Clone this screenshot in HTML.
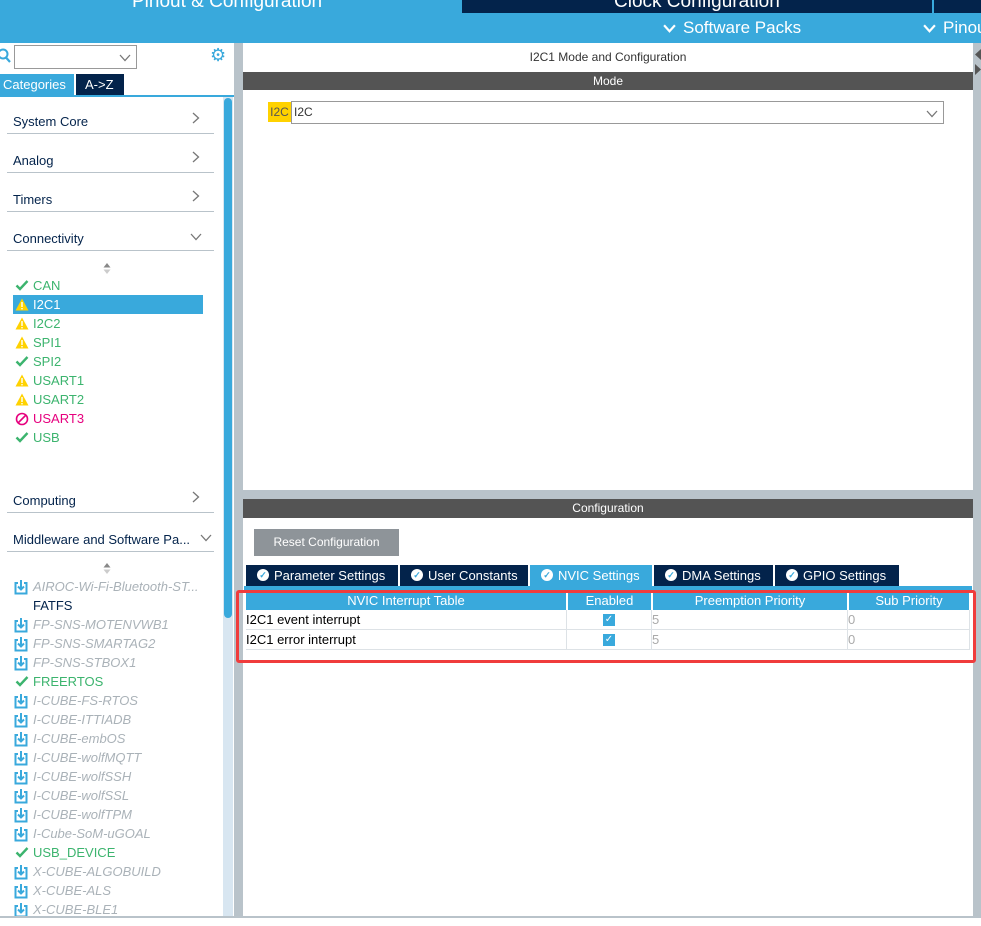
<!DOCTYPE html>
<html><head><style>
*{margin:0;padding:0;box-sizing:border-box}
body{width:981px;height:926px;overflow:hidden;background:#fff;font-family:"Liberation Sans",Arial,sans-serif;position:relative;font-size:13px}
.a{position:absolute;white-space:nowrap}
.blue{background:#39a9dc}
.navy{background:#03234b}
.cat{position:absolute;left:7px;width:207px;border-bottom:1px solid #b9c3ca;height:39px;color:#03234b;font-size:13px;padding:19px 0 0 6px}
.cat svg{position:absolute;right:14px;top:17px}
.it{position:absolute;left:13px;height:19px;font-size:13px;line-height:19px;padding-left:20px;white-space:nowrap}
.ic{position:absolute;left:2px;top:3px}
.g{color:#3cb46e}
.mw{position:absolute;left:13px;font-size:13px;line-height:19px;padding-left:20px;color:#aab2b8;font-style:italic;white-space:nowrap}
.mw .d{position:absolute;left:1px;top:3px}
.tab{position:absolute;top:565px;height:21px;background:#03234b;color:#fff;font-size:13px;line-height:21px;padding-left:28px}
.tab:before{content:"✓";position:absolute;left:11px;top:4px;width:12px;height:12px;border-radius:50%;background:#fff;color:#39a9dc;font-size:9px;line-height:12px;text-align:center;font-weight:bold}
.th{position:absolute;top:592px;height:18px;background:#39a9dc;color:#fff;font-size:13px;line-height:18px;text-align:center}
.td{position:absolute;height:20px;line-height:20px;font-size:13px;border-bottom:1px solid #dde2e6;border-right:1px solid #dde2e6}
.cb{position:absolute;width:12px;height:12px;background:#39a9dc;color:#fff;font-size:10px;line-height:12px;text-align:center}
</style></head><body>
<svg width="0" height="0" style="position:absolute"><defs>
<symbol id="w" viewBox="0 0 14 13"><path d="M7 0.5L13.5 12.5H0.5Z" fill="#ffd200"/><rect x="6.3" y="4" width="1.4" height="5" fill="#fff"/><rect x="6.3" y="10" width="1.4" height="1.4" fill="#fff"/></symbol>
<symbol id="c" viewBox="0 0 14 12"><path d="M1.5 6.5L5 10L12.5 2" stroke="#3cb46e" stroke-width="2.4" fill="none"/></symbol>
<symbol id="d" viewBox="0 0 14 15"><path d="M4 3H1.5V13.5H12.5V3H10" stroke="#39a9dc" stroke-width="2" fill="none"/><path d="M7 0V9M4 6.5L7 9.5L10 6.5" stroke="#39a9dc" stroke-width="2" fill="none"/></symbol>
<symbol id="r" viewBox="0 0 8 12"><path d="M1 1L6.5 6L1 11" stroke="#777" stroke-width="1.3" fill="none"/></symbol>
<symbol id="v" viewBox="0 0 12 8"><path d="M1 1L6 6.5L11 1" stroke="#777" stroke-width="1.3" fill="none"/></symbol>
<symbol id="vw" viewBox="0 0 12 8"><path d="M1 1L6 6.5L11 1" stroke="#fff" stroke-width="2" fill="none"/></symbol>
</defs></svg>
<div class="a blue" style="left:0;top:0;width:981px;height:43px"></div>
<div class="a" style="left:132px;top:-9px;color:#fff;font-size:19px">Pinout &amp; Configuration</div>
<div class="a navy" style="left:462px;top:0;width:470px;height:13px"></div>
<div class="a" style="left:614px;top:-9px;color:#fff;font-size:19px">Clock Configuration</div>
<div class="a navy" style="left:934px;top:0;width:47px;height:13px"></div>
<svg class="a" style="left:663px;top:24px" width="13" height="9"><use href="#vw"/></svg>
<div class="a" style="left:683px;top:18px;color:#fff;font-size:17px">Software Packs</div>
<svg class="a" style="left:923px;top:24px" width="13" height="9"><use href="#vw"/></svg>
<div class="a" style="left:943px;top:18px;color:#fff;font-size:17px">Pinout</div>

<!-- left panel -->
<svg class="a" style="left:-2px;top:48px" width="14" height="16"><circle cx="5" cy="6" r="4.5" stroke="#39a9dc" stroke-width="2" fill="none"/><path d="M8 9.5L12 14" stroke="#39a9dc" stroke-width="2.2"/></svg>
<div class="a" style="left:14px;top:45px;width:123px;height:24px;border:1px solid #999"></div>
<svg class="a" style="left:119px;top:54px" width="12" height="8"><use href="#v"/></svg>
<div class="a" style="left:210px;top:45px;color:#39a9dc;font-size:18px">⚙</div>
<div class="a blue" style="left:0;top:74px;width:74px;height:21px;color:#fff;font-size:13px;line-height:21px;padding-left:3px">Categories</div>
<div class="a navy" style="left:76px;top:74px;width:48px;height:21px;color:#fff;font-size:13px;line-height:21px;padding-left:9px">A-&gt;Z</div>
<div class="a blue" style="left:0;top:95px;width:234px;height:2px"></div>
<div class="a" style="left:223px;top:97px;width:10px;height:820px;background:#d8e6f1"></div>
<div class="a blue" style="left:224px;top:98px;width:8px;height:520px;border-radius:4px"></div>
<div class="a" style="left:234px;top:43px;width:9px;height:883px;background:#b9c3ca"></div>

<div class="cat" style="top:95px">System Core<svg width="8" height="12"><use href="#r"/></svg></div>
<div class="cat" style="top:134px">Analog<svg width="8" height="12"><use href="#r"/></svg></div>
<div class="cat" style="top:173px">Timers<svg width="8" height="12"><use href="#r"/></svg></div>
<div class="cat" style="top:212px">Connectivity<svg width="12" height="8" style="top:21px;right:12px"><use href="#v"/></svg></div>
<svg class="a" style="left:103px;top:263px" width="8" height="11"><path d="M4 0L7.5 4.5H0.5Z" fill="#888"/><path d="M4 11L7.5 6.5H0.5Z" fill="#ccc"/></svg>
<div class="it g" style="top:276px"><svg class="ic" width="14" height="12"><use href="#c"/></svg>CAN</div>
<div class="it" style="top:295px;width:190px;background:#39a9dc;color:#fff"><svg class="ic" width="14" height="13"><use href="#w"/></svg>I2C1</div>
<div class="it g" style="top:314px"><svg class="ic" width="14" height="13"><use href="#w"/></svg>I2C2</div>
<div class="it g" style="top:333px"><svg class="ic" width="14" height="13"><use href="#w"/></svg>SPI1</div>
<div class="it g" style="top:352px"><svg class="ic" width="14" height="12"><use href="#c"/></svg>SPI2</div>
<div class="it g" style="top:371px"><svg class="ic" width="14" height="13"><use href="#w"/></svg>USART1</div>
<div class="it g" style="top:390px"><svg class="ic" width="14" height="13"><use href="#w"/></svg>USART2</div>
<div class="it" style="top:409px;color:#e6007e"><svg class="ic" width="14" height="14"><circle cx="7" cy="7" r="5.5" stroke="#e6007e" stroke-width="1.6" fill="none"/><path d="M3 11L11 3" stroke="#e6007e" stroke-width="1.6"/></svg>USART3</div>
<div class="it g" style="top:428px"><svg class="ic" width="14" height="12"><use href="#c"/></svg>USB</div>
<div class="cat" style="top:474px">Computing<svg width="8" height="12"><use href="#r"/></svg></div>
<div class="cat" style="top:513px">Middleware and Software Pa...<svg width="12" height="8" style="top:21px;right:2px"><use href="#v"/></svg></div>
<svg class="a" style="left:103px;top:563px" width="8" height="11"><path d="M4 0L7.5 4.5H0.5Z" fill="#888"/><path d="M4 11L7.5 6.5H0.5Z" fill="#ccc"/></svg>
<div class="mw" style="top:577px"><svg class="d" width="14" height="15"><use href="#d"/></svg>AIROC-Wi-Fi-Bluetooth-ST...</div>
<div class="mw" style="top:596px;color:#03234b;font-style:normal">FATFS</div>
<div class="mw" style="top:615px"><svg class="d" width="14" height="15"><use href="#d"/></svg>FP-SNS-MOTENVWB1</div>
<div class="mw" style="top:634px"><svg class="d" width="14" height="15"><use href="#d"/></svg>FP-SNS-SMARTAG2</div>
<div class="mw" style="top:653px"><svg class="d" width="14" height="15"><use href="#d"/></svg>FP-SNS-STBOX1</div>
<div class="it g" style="top:672px"><svg class="ic" width="14" height="12"><use href="#c"/></svg>FREERTOS</div>
<div class="mw" style="top:691px"><svg class="d" width="14" height="15"><use href="#d"/></svg>I-CUBE-FS-RTOS</div>
<div class="mw" style="top:710px"><svg class="d" width="14" height="15"><use href="#d"/></svg>I-CUBE-ITTIADB</div>
<div class="mw" style="top:729px"><svg class="d" width="14" height="15"><use href="#d"/></svg>I-CUBE-embOS</div>
<div class="mw" style="top:748px"><svg class="d" width="14" height="15"><use href="#d"/></svg>I-CUBE-wolfMQTT</div>
<div class="mw" style="top:767px"><svg class="d" width="14" height="15"><use href="#d"/></svg>I-CUBE-wolfSSH</div>
<div class="mw" style="top:786px"><svg class="d" width="14" height="15"><use href="#d"/></svg>I-CUBE-wolfSSL</div>
<div class="mw" style="top:805px"><svg class="d" width="14" height="15"><use href="#d"/></svg>I-CUBE-wolfTPM</div>
<div class="mw" style="top:824px"><svg class="d" width="14" height="15"><use href="#d"/></svg>I-Cube-SoM-uGOAL</div>
<div class="it g" style="top:843px"><svg class="ic" width="14" height="12"><use href="#c"/></svg>USB_DEVICE</div>
<div class="mw" style="top:862px"><svg class="d" width="14" height="15"><use href="#d"/></svg>X-CUBE-ALGOBUILD</div>
<div class="mw" style="top:881px"><svg class="d" width="14" height="15"><use href="#d"/></svg>X-CUBE-ALS</div>
<div class="mw" style="top:900px"><svg class="d" width="14" height="15"><use href="#d"/></svg>X-CUBE-BLE1</div>

<!-- right panel -->
<div class="a" style="left:973px;top:43px;width:8px;height:883px;background:#b9c3ca"></div>
<svg class="a" style="left:974px;top:48px" width="7" height="30"><path d="M7 1V12L1 6.5Z" fill="#555"/><path d="M1 16V27L7 21.5Z" fill="#555"/></svg>
<div class="a" style="left:243px;top:50px;width:730px;text-align:center;color:#333;font-size:12px">I2C1 Mode and Configuration</div>
<div class="a" style="left:243px;top:72px;width:730px;height:18px;background:#545454;color:#fff;text-align:center;font-size:12px;line-height:18px">Mode</div>
<div class="a" style="left:268px;top:102px;width:23px;height:20px;background:#ffd200;color:#555;font-size:12px;line-height:20px;text-align:center">I2C</div>
<div class="a" style="left:291px;top:101px;width:653px;height:23px;border:1px solid #999;color:#333;font-size:12px;line-height:21px;padding-left:2px">I2C<svg width="12" height="8" style="position:absolute;right:5px;top:8px"><use href="#v"/></svg></div>
<div class="a" style="left:243px;top:490px;width:730px;height:9px;background:#b9c3ca"></div>
<div class="a" style="left:243px;top:499px;width:730px;height:19px;background:#545454;color:#fff;text-align:center;font-size:12px;line-height:19px">Configuration</div>
<div class="a" style="left:254px;top:529px;width:145px;height:27px;background:#8e9499;color:#fff;font-size:12px;line-height:27px;text-align:center">Reset Configuration</div>
<div class="tab" style="left:246px;width:152px">Parameter Settings</div>
<div class="tab" style="left:400px;width:128px">User Constants</div>
<div class="tab" style="left:530px;width:122px;background:#39a9dc">NVIC Settings</div>
<div class="tab" style="left:654px;width:119px">DMA Settings</div>
<div class="tab" style="left:775px;width:124px">GPIO Settings</div>
<div class="a blue" style="left:244px;top:586px;width:728px;height:4px"></div>
<div class="th" style="left:246px;width:320px">NVIC Interrupt Table</div>
<div class="th" style="left:568px;width:83px">Enabled</div>
<div class="th" style="left:653px;width:194px">Preemption Priority</div>
<div class="th" style="left:849px;width:120px">Sub Priority</div>
<div class="td" style="left:246px;top:610px;width:321px">I2C1 event interrupt</div>
<div class="td" style="left:567px;top:610px;width:85px"></div>
<div class="cb" style="left:603px;top:614px">✓</div>
<div class="td" style="left:652px;top:610px;width:196px;color:#aaa">5</div>
<div class="td" style="left:848px;top:610px;width:122px;color:#aaa">0</div>
<div class="td" style="left:246px;top:630px;width:321px">I2C1 error interrupt</div>
<div class="td" style="left:567px;top:630px;width:85px"></div>
<div class="cb" style="left:603px;top:634px">✓</div>
<div class="td" style="left:652px;top:630px;width:196px;color:#aaa">5</div>
<div class="td" style="left:848px;top:630px;width:122px;color:#aaa">0</div>
<div class="a" style="left:236px;top:590px;width:740px;height:73px;border:3px solid #f03c3c;border-radius:3px"></div>
<div class="a" style="left:0;top:916px;width:981px;height:2px;background:#b9c3ca"></div>
<div class="a" style="left:0;top:918px;width:981px;height:8px;background:#fff"></div>
</body></html>
